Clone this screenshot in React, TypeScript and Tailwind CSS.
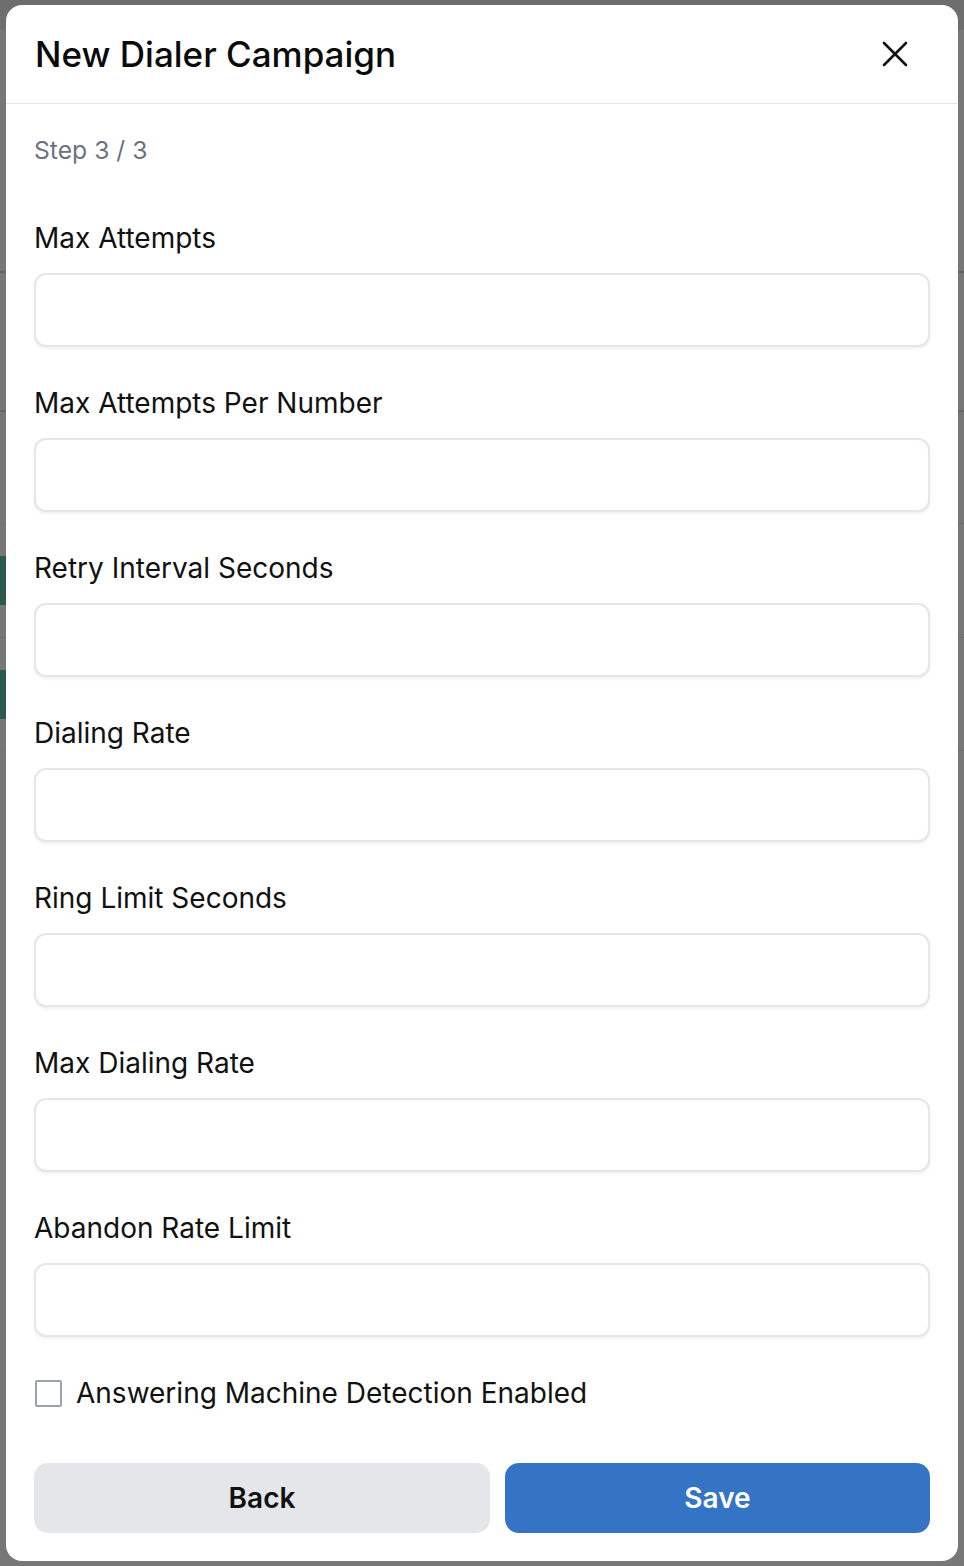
import { useState } from "react";

const fields = [
  "Max Attempts",
  "Max Attempts Per Number",
  "Retry Interval Seconds",
  "Dialing Rate",
  "Ring Limit Seconds",
  "Max Dialing Rate",
  "Abandon Rate Limit",
];

const CloseIcon = () => (
  <svg width="26" height="26" viewBox="0 0 26 26" fill="none" stroke="#111111" strokeWidth="2.6" strokeLinecap="round">
    <path d="M2 2L24 24M24 2L2 24" />
  </svg>
);

export default function App() {
  const [values, setValues] = useState<Record<string, string>>({});
  const [amd, setAmd] = useState(false);

  return (
    <div className="relative min-h-[1566px] w-[964px] bg-[#777777] px-[6px] py-[5px] font-['Inter','Noto_Sans',sans-serif]">
      {/* page behind the overlay */}
      <div className="absolute left-0 top-0 h-[30px] w-full bg-[#6e6e6e]" />
      <div className="absolute left-0 top-[271px] h-[2px] w-full bg-[#5f6166]" />
      <div className="absolute left-0 top-[410px] h-[2px] w-full bg-[#64666b]" />
      <div className="absolute left-0 top-[523px] h-px w-full bg-[#6c6c6e]" />
      <div className="absolute left-0 top-[556px] h-[49px] w-[6px] bg-[#2d5a4d]" />
      <div className="absolute left-0 top-[637px] h-px w-full bg-[#6c6c6e]" />
      <div className="absolute left-0 top-[670px] h-[49px] w-[6px] bg-[#2d5a4d]" />
      <div className="absolute left-0 top-[750px] h-px w-full bg-[#6c6c6e]" />

      <div className="relative flex h-[1556px] w-[952px] flex-col overflow-hidden rounded-[16px] bg-white">
        <div className="flex h-[99px] shrink-0 items-center justify-between border-b border-[#e4e4e9] pl-[29px] pr-[50px]">
          <h2 className="text-[35px] font-medium text-[#0a0a0a]">New Dialer Campaign</h2>
          <button type="button" className="flex h-[26px] w-[26px] items-center justify-center">
            <CloseIcon />
          </button>
        </div>

        <div className="flex flex-1 flex-col px-[28px] pb-[28px] pt-[28px]">
          <p className="h-[36px] text-[24.7px] leading-[36px] text-[#6b7280]">Step 3 / 3</p>

          <div className="mt-[50px] flex flex-col gap-[36px]">
            {fields.map((f) => (
              <div key={f} className="flex flex-col gap-[15px]">
                <label className="text-[28px] leading-[40px] text-[#111111]">{f}</label>
                <input
                  type="text"
                  value={values[f] ?? ""}
                  onChange={(e) => setValues((v) => ({ ...v, [f]: e.target.value }))}
                  className="h-[74px] w-full rounded-[12px] border-2 border-[#e5e5ea] bg-white px-4 text-[26px] shadow-[0_2px_3px_rgba(0,0,0,0.06)] outline-none"
                />
              </div>
            ))}
          </div>

          <label className="mt-[36px] flex h-[40px] items-center gap-[14px]">
            <input
              type="checkbox"
              checked={amd}
              onChange={(e) => setAmd(e.target.checked)}
              className="ml-[1px] h-[27px] w-[27px] appearance-none rounded-[2px] border-2 border-[#9ca3af] bg-white"
            />
            <span className="text-[28px] leading-[40px] text-[#111111]">Answering Machine Detection Enabled</span>
          </label>

          <div className="mt-auto flex gap-[15px]">
            <button
              type="button"
              className="h-[70px] w-[456px] rounded-[14px] bg-[#e5e6ea] text-[28px] font-semibold text-[#111111]"
            >
              Back
            </button>
            <button
              type="button"
              className="h-[70px] flex-1 rounded-[14px] bg-[#3574c4] text-[28px] font-semibold text-white"
            >
              Save
            </button>
          </div>
        </div>
      </div>
    </div>
  );
}
